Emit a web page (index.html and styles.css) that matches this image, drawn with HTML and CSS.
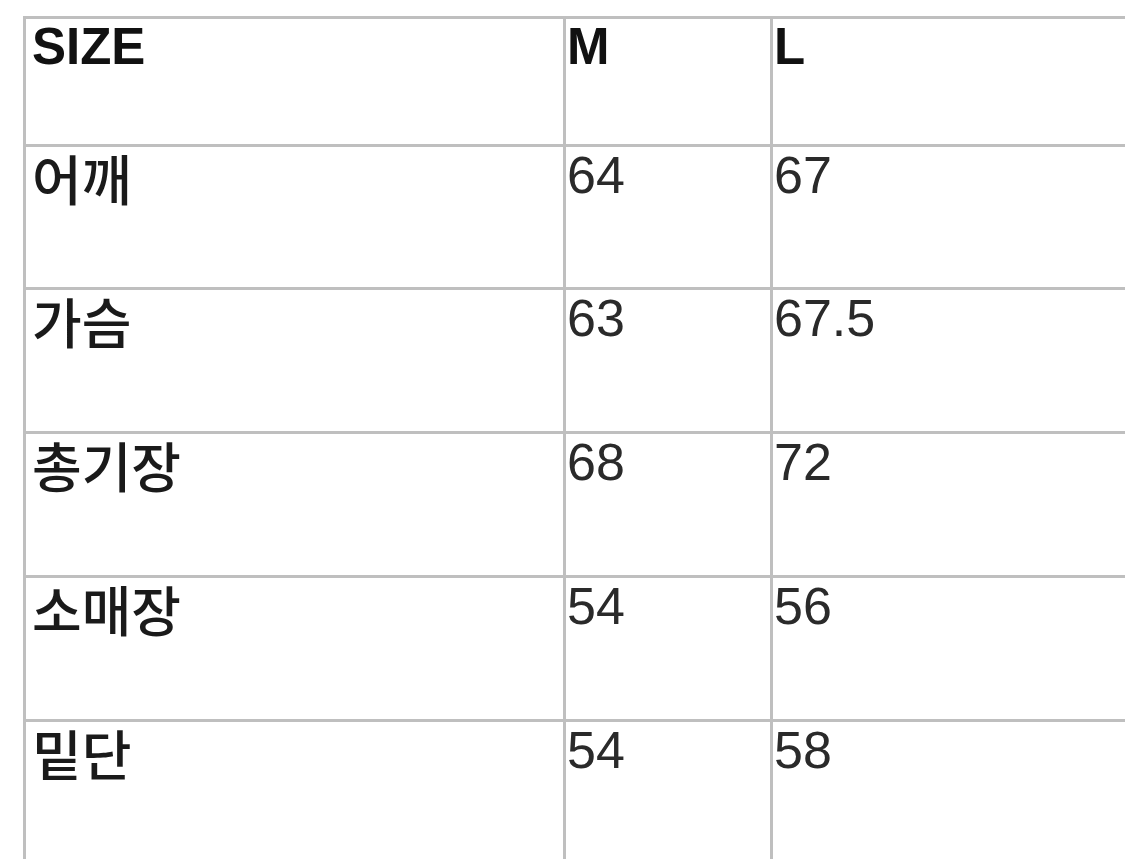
FILE: index.html
```html
<!DOCTYPE html>
<html lang="ko">
<head>
<meta charset="utf-8">
<title>SIZE</title>
<link rel="stylesheet" href="styles.css">
</head>
<body>
<div class="sheet">
  <div class="cell c1 head">SIZE</div>
  <div class="cell c2 head">M</div>
  <div class="cell c3 head">L</div>

  <div class="cell c1 ko">어깨</div>
  <div class="cell c2">64</div>
  <div class="cell c3">67</div>

  <div class="cell c1 ko">가슴</div>
  <div class="cell c2">63</div>
  <div class="cell c3">67.5</div>

  <div class="cell c1 ko">총기장</div>
  <div class="cell c2">68</div>
  <div class="cell c3">72</div>

  <div class="cell c1 ko">소매장</div>
  <div class="cell c2">54</div>
  <div class="cell c3">56</div>

  <div class="cell c1 ko">밑단</div>
  <div class="cell c2">54</div>
  <div class="cell c3">58</div>
</div>
</body>
</html>
```

FILE: styles.css
```css
html, body {
  margin: 0;
  padding: 0;
  overflow: hidden;
  background: #ffffff;
}

body {
  width: 1125px;
  height: 859px;
}

.sheet {
  margin: 16px 0 0 23px;
  display: grid;
  grid-template-columns: 537px 204px 500px;
  grid-template-rows: 125px 140px 141px 141px 141px 200px;
  gap: 3px;
  padding: 3px;
  background: #bfbfbf;
  width: max-content;
}

.cell {
  background: #ffffff;
  font-family: "Liberation Sans", Arial, "Noto Sans CJK KR", sans-serif;
  font-size: 52px;
  line-height: 1;
  color: #2a2a2a;
  padding: 2px 0 0 1px;
}

.c1 {
  padding-left: 6px;
}

.head {
  font-weight: bold;
  font-size: 51px;
  color: #111111;
}

.ko {
  font-family: "Noto Sans CJK KR", sans-serif;
  font-size: 54px;
  font-weight: 500;
  color: #1a1a1a;
  padding-top: 4px;
}
```
